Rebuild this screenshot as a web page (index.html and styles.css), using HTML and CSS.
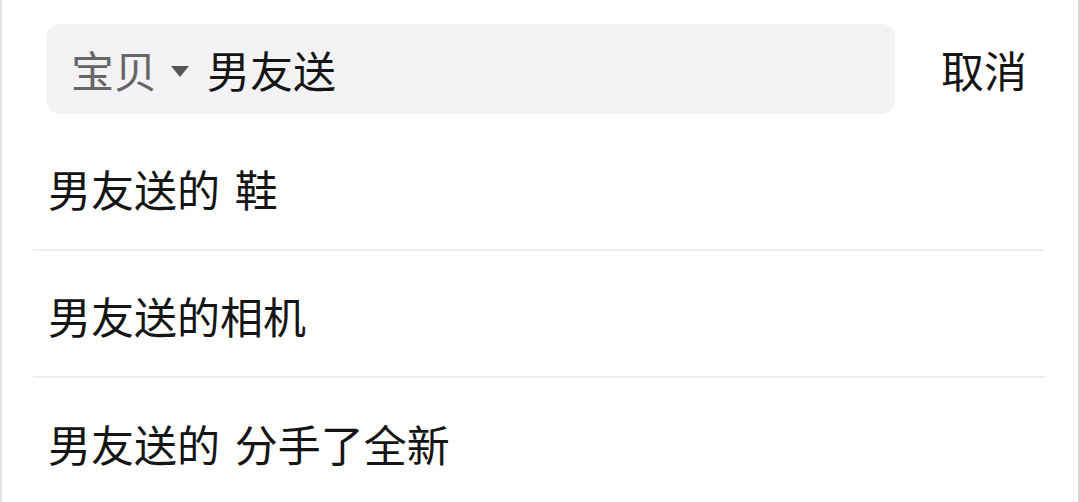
FILE: index.html
```html
<!DOCTYPE html>
<html lang="zh-CN">
<head>
<meta charset="utf-8">
<link rel="stylesheet" href="styles.css">
</head>
<body>
<div class="page">
  <header class="header">
    <div class="search">
      <span class="scope">宝贝</span>
      <span class="caret"></span>
      <span class="query">男友送</span>
    </div>
    <div class="cancel">取消</div>
  </header>
  <ul class="suggestions">
    <li class="item">男友送的 鞋</li>
    <li class="item">男友送的相机</li>
    <li class="item last">男友送的 分手了全新</li>
  </ul>
</div>
</body>
</html>
```
FILE: styles.css
```css
html, body {
  margin: 0;
  padding: 0;
  background: #ffffff;
}
.page {
  width: 1080px;
  height: 502px;
  box-sizing: border-box;
  border-left: 2px solid #e2e2e2;
  border-right: 2px solid #d6d6d6;
  overflow: hidden;
  font-family: "Noto Sans CJK SC", "Noto Sans", sans-serif;
  font-weight: 400;
  color: #151515;
  font-size: 43px;
}
.header {
  display: flex;
  align-items: center;
  padding: 24px 0 0 44px;
}
.search {
  width: 849px;
  height: 90px;
  border-radius: 14px;
  background: #f3f3f5;
  display: flex;
  align-items: center;
  padding-left: 25px;
  box-sizing: border-box;
  line-height: 1;
}
.scope {
  color: #666666;
}
.caret {
  width: 0;
  height: 0;
  border-left: 9px solid transparent;
  border-right: 9px solid transparent;
  border-top: 11px solid #555555;
  margin-left: 14px;
  margin-top: 4px;
}
.query {
  margin-left: 18px;
  color: #151515;
}
.cancel {
  margin-left: 46px;
  line-height: 1;
  color: #151515;
}
.suggestions {
  list-style: none;
  margin: 10px 0 0 0;
  padding: 0 33px 0 31px;
}
.item {
  height: 127px;
  box-sizing: border-box;
  border-bottom: 2px solid #eeeeef;
  display: flex;
  align-items: center;
  padding-left: 15px;
  padding-top: 4px;
  line-height: 1;
  word-spacing: 5px;
}
.item.last {
  border-bottom: none;
}
```
